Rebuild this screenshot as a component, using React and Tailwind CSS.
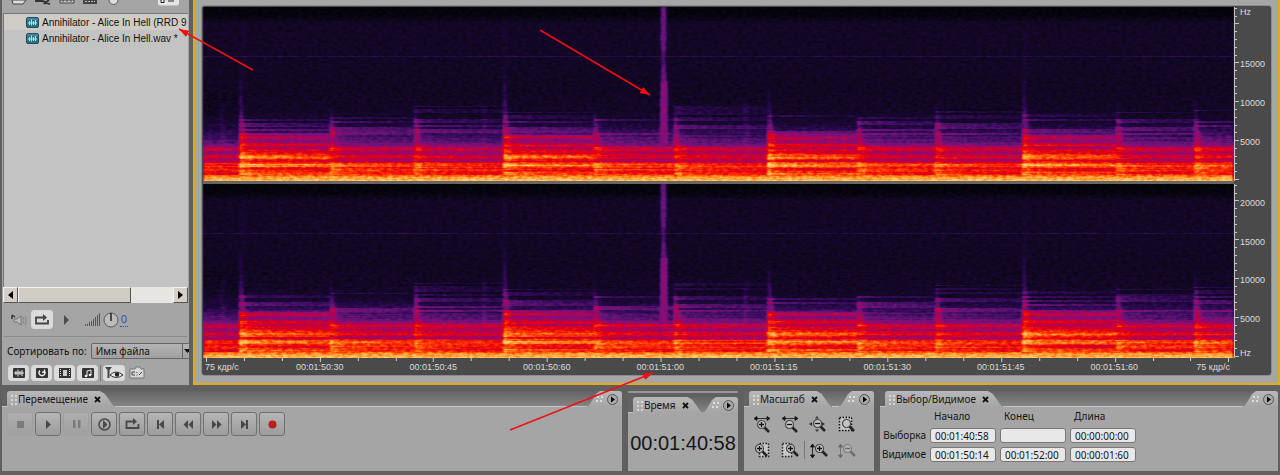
import React from "react";
import { clsx } from "clsx";

/* ---------- spectrogram ---------- */

const PLOT_W = 1032;
const PLOT_H = 174;
const CELL = 4;

// start = onset column, reach = height of the overtones, tall = top of the attack
const NOTES = [
  { start: 0, gain: -0.05, reach: 0 },
  { start: 36, gain: 0.01, reach: 2, tall: 66, loud: true },
  { start: 127, gain: 0.01, reach: 4, tall: 96 },
  { start: 211, gain: 0, reach: 14, tall: 92 },
  { start: 300, gain: 0.01, reach: 8, tall: 60, loud: true },
  { start: 391, gain: 0.01, reach: 3, tall: 98 },
  { start: 471, gain: 0, reach: 14, tall: 96 },
  { start: 565, gain: 0.01, reach: 6, tall: 78, loud: true },
  { start: 655, gain: 0.01, reach: 3, tall: 108 },
  { start: 733, gain: 0, reach: 12, tall: 96 },
  { start: 820, gain: 0.01, reach: 6, tall: 66, loud: true },
  { start: 914, gain: 0, reach: 8, tall: 96 },
  { start: 992, gain: 0.02, reach: 10, tall: 90 },
];

const AIR = [
  [0, 0.01], [9, 0.03], [16, 0.12], [60, 0.12], [85, 0.11], [105, 0.12],
  [114, 0.16], [120, 0.22], [126, 0.29],
];

// brightness of the harmonics in the lower part, top to bottom
const QUIET = [
  ...AIR, [130, 0.36], [134, 0.4], [137, 0.47], [139, 0.52], [141, 0.68], [143, 0.68],
  [145, 0.58], [147, 0.6], [149, 0.7], [151, 0.71], [152, 0.62], [155, 0.6], [156, 0.79],
  [159, 0.85], [161, 0.76], [163, 0.83], [165, 0.76], [167, 0.77], [168, 0.82], [170, 0.91], [174, 0.98],
];
const LOUD = [
  ...AIR, [127, 0.38], [129, 0.6], [131, 0.65], [133, 0.52], [135, 0.52], [137, 0.68], [139, 0.7],
  [141, 0.6], [143, 0.7], [146, 0.72], [148, 0.8], [150, 0.89], [152, 0.84], [154, 0.68],
  [156, 0.84], [158, 0.94], [160, 0.88], [161, 0.74], [164, 0.76], [166, 0.86], [168, 0.82], [170, 0.91], [174, 0.98],
];

const hash = (a, b) => {
  const v = Math.sin(a * 127.1 + b * 311.7) * 43758.5453;
  return v - Math.floor(v);
};

const valueAt = (profile, y) => {
  for (let i = 1; i < profile.length; i++) {
    const [y1, v1] = profile[i];
    const [y0, v0] = profile[i - 1];
    if (y <= y1) return v0 + ((v1 - v0) * (y - y0)) / (y1 - y0);
  }
  return 0.98;
};

// one path per brightness level, so that the drawing stays small
const buildLevels = (seed) => {
  const levels = {};
  for (let n = 0; n < NOTES.length; n++) {
    const note = NOTES[n];
    const end = n + 1 < NOTES.length ? NOTES[n + 1].start : PLOT_W;
    const profile = note.loud ? LOUD : QUIET;
    for (let y = 86; y < PLOT_H; y++) {
      const row = Math.floor(y / 2);
      for (let x = note.start; x < end; x += CELL) {
        const dx = x - note.start;
        const fade = Math.exp(-dx / 55);
        const attack = n > 0 && dx < 10 ? 1 - dx / 10 : 0;
        let v = valueAt(profile, y + 0.5);
        if (y < 168) v += note.gain * (y > 118 ? 1 : 0.3);
        if (y > 126 && y < 168) v += (fade - 0.6) * 0.09 - 0.03;
        if (n > 0 && y > 112 - note.reach && y < 128) {
          v += hash(row, n + seed) > 0.5 ? 0.14 * (0.35 + fade * 0.8) * (y < 112 ? 0.8 : 1) : -0.02;
        }
        if (y >= 112 && y < 168) v += attack * 0.06;
        if (y >= 128 && y < 168) v += (hash(y, n * 3 + seed) - 0.5) * 0.07;
        v += (hash(x, y + seed * 7) - 0.5) * 0.04;
        const key = Math.round(Math.max(0, Math.min(1, v)) * 50);
        const w = Math.min(CELL, end - x);
        levels[key] = (levels[key] || "") + `M${x} ${y}h${w}v1h-${w}z`;
      }
    }
  }
  return Object.entries(levels);
};

const Spectrogram = ({ id, seed }) => {
  const levels = React.useMemo(() => buildLevels(seed), [seed]);
  const gray = (v) => `rgb(${v * 255},${v * 255},${v * 255})`;

  return (
    <svg
      viewBox={`0 0 ${PLOT_W} ${PLOT_H}`}
      preserveAspectRatio="none"
      className="block w-full h-[174px]"
      role="img"
      aria-label={id}
    >
      <defs>
        <filter id={`heat-${id}`} x="0" y="0" width="1" height="1" colorInterpolationFilters="sRGB">
          <feTurbulence type="fractalNoise" baseFrequency="0.2 0.35" numOctaves="2" seed={seed} />
          <feColorMatrix values="1 0 0 0 0  1 0 0 0 0  1 0 0 0 0  0 0 0 0 1" result="noise" />
          <feGaussianBlur in="SourceGraphic" stdDeviation="0.8 0.4" result="soft" />
          <feComposite in="soft" in2="noise" operator="arithmetic" k1="0.1" k2="0.95" k3="0.14" k4="-0.07" />
          <feComponentTransfer>
            <feFuncR type="table" tableValues="0.01 0.06 0.12 0.24 0.4 0.55 0.74 0.9 0.99 1 1" />
            <feFuncG type="table" tableValues="0.01 0.03 0.03 0.05 0.08 0.05 0 0 0.22 0.57 0.8" />
            <feFuncB type="table" tableValues="0.03 0.12 0.24 0.38 0.46 0.46 0.28 0.06 0.01 0.14 0.42" />
          </feComponentTransfer>
        </filter>
        <linearGradient id={`air-${id}`} x1="0" y1="0" x2="0" y2="1">
          {AIR.map(([y, v]) => (
            <stop key={y} offset={y / PLOT_H} stopColor={gray(v)} />
          ))}
        </linearGradient>
        <linearGradient id={`hit-${id}`} x1="0" y1="0" x2="0" y2="1">
          <stop offset="0" stopColor="#fff" stopOpacity="0.04" />
          <stop offset="0.6" stopColor="#fff" stopOpacity="0.24" />
          <stop offset="1" stopColor="#fff" stopOpacity="0" />
        </linearGradient>
      </defs>
      <g filter={`url(#heat-${id})`}>
        <rect width={PLOT_W} height={PLOT_H} fill={`url(#air-${id})`} />
        <g shapeRendering="crispEdges">
          {levels.map(([key, d]) => (
            <path key={key} d={d} fill={gray(key / 50)} />
          ))}
        </g>
        <path d="M0 49.5H1032" stroke="#fff" strokeOpacity="0.13" />
        {NOTES.filter((note) => note.tall).map(({ start, tall }) => (
          <path
            key={start}
            d={`M${start} ${tall}h2l3 ${(150 - tall) / 2}l4 ${(150 - tall) / 2}h-9z`}
            fill={`url(#hit-${id})`}
          />
        ))}
        {[17, 279, 541].map((x) => (
          <rect key={x} x={x} y="96" width="5" height="44" fill="#fff" opacity="0.07" />
        ))}
        {[38, 300, 821].map((x) => (
          <rect key={x} x={x} y="14" width="5" height="70" fill="#fff" opacity="0.03" />
        ))}
        {/* the click */}
        <path d="M458 0h6v30l-1 24 2 26v58h-7v-58l1-26-1-24z" fill="#6a6a6a" />
        <path d="M458 74h7v64h-8z" fill="#7c7c7c" />
        <path d="M459 44h4v16h-4z" fill="#505050" opacity="0.7" />
      </g>
    </svg>
  );
};

const axisTicks = (zero) => {
  let d = "";
  for (let k = 0; k <= 22; k++) {
    const y = Math.round(zero - k * 7.78) + 0.5;
    if (y > 0) d += `M0 ${y}h${k % 5 === 0 ? 4 : 2}`;
  }
  return d;
};

const scaleText = "font-['Liberation_Sans',Arial,sans-serif] text-[9px] leading-[10px] text-[#dcdcdc]";

const FrequencyAxis = ({ labels, zero, top, bottom }) => (
  <div className="flex h-[174px] border-l border-[#c4c4c4]">
    <svg width="5" height="174" className="shrink-0" aria-hidden="true">
      <path d={axisTicks(zero)} stroke="#c4c4c4" />
    </svg>
    <div className={clsx("flex flex-col grow justify-end", scaleText)}>
      {top && <span className="grow">Hz</span>}
      {labels.map((label) => (
        <span key={label} className="h-[39px] flex items-center">{label}</span>
      ))}
      <span className="h-5 flex items-end">{bottom && "Hz"}</span>
    </div>
  </div>
);

const TIMES = [
  "00:01:50:30", "00:01:50:45", "00:01:50:60", "00:01:51:00",
  "00:01:51:15", "00:01:51:30", "00:01:51:45", "00:01:51:60",
];

const TIME_TICKS = Array.from({ length: 28 }, (_, i) => `M${Math.round(3 + i * 37.9) + 0.5} 0v${i % 3 === 0 ? 4 : 3}`).join("");

const EditorPanel = () => (
  <main className="grow min-w-0 border-2 border-t-0 border-[#e3aa1f] bg-[#a6a6a6] px-[7px] pt-[6px] pb-2">
    <div className="rounded-[3px] bg-[#4a4a4a] pt-px pl-px shadow-[0_0_0_1px_#8c8c8c]">
      <div className="flex">
        <div className="grow min-w-0">
          <Spectrogram id="left" seed={3} />
          <div className="h-[3px] bg-[#666]" />
          <Spectrogram id="right" seed={8} />
        </div>
        <div className="w-[37px] shrink-0 flex flex-col gap-[3px]">
          <FrequencyAxis labels={["15000", "10000", "5000"]} zero={172} top />
          <FrequencyAxis labels={["20000", "15000", "10000", "5000"]} zero={172} bottom />
        </div>
      </div>
      <div className={clsx("mr-[37px] h-[17px]", scaleText)}>
        <svg viewBox="0 0 1032 4" preserveAspectRatio="none" className="block w-full h-1" aria-hidden="true">
          <path d={TIME_TICKS} stroke="#d0d0d0" />
        </svg>
        <div className="flex whitespace-nowrap">
          <span className="w-[60px] pl-0.5">75 кдр/с</span>
          {TIMES.map((time) => (
            <span key={time} className="flex-1 text-center">{time}</span>
          ))}
          <span className="w-[63px] pr-1 text-right">75 кдр/с</span>
        </div>
      </div>
    </div>
  </main>
);

/* ---------- file list ---------- */

const WaveIcon = () => (
  <svg width="13" height="11" viewBox="0 0 13 11" className="shrink-0" aria-hidden="true">
    <rect x="0.5" y="0.5" width="12" height="10" rx="1.5" fill="#2c6f88" stroke="#234a5e" />
    <path d="M1 2h11" stroke="#5e9bb0" />
    <path d="M2 6h9M3.5 4v4M5.5 2.5v6M7.5 4v4M9.5 3v5" stroke="#9ff0e4" />
  </svg>
);

const FILES = [
  { name: "Annihilator - Alice In Hell (RRD 9", active: true },
  { name: "Annihilator - Alice In Hell.wav *" },
];

const FILTERS = [
  { label: "Аудио", icon: <><rect x="2" y="1" width="12" height="10" rx="1" fill="#333" /><path d="M3 6h10M5 4v4M7 2.5v7M9 4v4M11 3v6" stroke="#eee" /></> },
  { label: "Петли", icon: <><rect x="2" y="1" width="12" height="10" rx="1" fill="#333" /><path d="M6 3.5a3 3 0 1 0 4 0M10.5 2.5v2.8H8" fill="none" stroke="#eee" strokeWidth="1.5" /></> },
  { label: "Видео", icon: <><rect x="2" y="1" width="12" height="10" fill="#333" /><path d="M6 3h4v6H6z" fill="#ccc" /><path d="M3.5 2v8M12.5 2v8" stroke="#ddd" strokeDasharray="1 1" /></> },
  { label: "MIDI", icon: <><rect x="2" y="1" width="12" height="10" rx="1" fill="#333" /><path d="M7 9V4l4-1v5" fill="none" stroke="#eee" /><circle cx="6" cy="9" r="1.3" fill="#eee" /><circle cx="10" cy="8" r="1.3" fill="#eee" /></> },
];

const whiteButton = "flex items-center justify-center rounded-[3px] border border-[#d8d8d8] bg-[#dcdcdc]";

const FilesPanel = () => (
  <aside className="w-[193px] shrink-0 border-l-2 border-r-4 border-[#606060] bg-[#a5a5a5] flex flex-col overflow-hidden text-[#111]">
    <div className="h-[13px] shrink-0 flex items-start pl-2">
      <svg width="148" height="7" aria-hidden="true">
        <path d="M2 0h14l-3 4H3z" fill="#ddd" stroke="#444" />
        <path d="M25 1h8M30 0l10 4M39 0l-5 4" stroke="#333" strokeWidth="2" />
        <path d="M50 0v3h14V0z" fill="#ccc" stroke="#444" /><path d="M52 1h10" stroke="#444" strokeDasharray="2 2" />
        <path d="M73 0h14v4H73z" fill="#444" /><path d="M75 1.5h10" stroke="#bbb" strokeDasharray="2 1" />
        <path d="M99 0a4 4 0 0 0 9 0" fill="#ddd" stroke="#555" />
      </svg>
      <svg width="22" height="7" aria-hidden="true">
        <path d="M0 0h21v3.500a2 2 0 0 1-2 2H2a2 2 0 0 1-2-2z" fill="#e4e4e4" />
        <path d="M3 0v2.500h3V0M10 1h6" fill="none" stroke="#222" />
      </svg>
    </div>
    <div className="grow mx-px border-t border-l border-[#777] bg-[#c3c3c3] overflow-hidden">
      <ul className="font-['Liberation_Sans',Arial,sans-serif] text-[10px]">
        {FILES.map((file) => (
          <li key={file.name} className={clsx("h-4 pl-[22px] flex items-center gap-[3px] whitespace-pre", file.active && "bg-[#cfccc6]")}>
            <WaveIcon />
            <span>{file.name}</span>
          </li>
        ))}
      </ul>
    </div>
    <div className="h-4 shrink-0 mx-px flex bg-[#e6e5e2]">
      <button aria-label="Прокрутить влево" className="w-[15px] flex items-center justify-center border border-[#f4f4f4] border-r-[#555] border-b-[#555] bg-[#d4d0c8]">
        <svg width="5" height="8"><path d="M5 0v8L0 4z" fill="#000" /></svg>
      </button>
      <div className="w-[113px] border border-[#f4f4f4] border-r-[#555] border-b-[#555] bg-[#d0ccc4]" />
      <div className="grow" />
      <button aria-label="Прокрутить вправо" className="w-[15px] flex items-center justify-center border border-[#f4f4f4] border-r-[#555] border-b-[#555] bg-[#d4d0c8]">
        <svg width="5" height="8"><path d="M0 0v8l5-4z" fill="#000" /></svg>
      </button>
    </div>
    <div className="h-[34px] shrink-0 mx-0.5 pl-[7px] flex items-center border-b border-[#8a8a8a]">
      <svg width="16" height="14" aria-hidden="true">
        <path d="M1 2v4M1 2l3 2" stroke="#333" fill="none" strokeWidth="1.5" />
        <path d="M3 6h3l4-3v9L6 9H3z" fill="#bbb" stroke="#777" />
        <path d="M12 4q2 3 0 7M14 3q3 4 0 9" stroke="#888" fill="none" />
      </svg>
      <button aria-label="Повтор" className={clsx(whiteButton, "ml-1 w-[22px] h-[19px]")}>
        <svg width="16" height="12"><path d="M5 3.5H2v6h12V6M4 3.5h6" fill="none" stroke="#444" strokeWidth="1.8" /><path d="M9 0v7l4-3.500z" fill="#444" /></svg>
      </button>
      <button aria-label="Воспроизвести" className="ml-2.5 w-2 h-3">
        <svg width="7" height="10"><path d="M1 0v10l5-5z" fill="#4c4c4c" /></svg>
      </button>
      <svg width="15" height="14" className="ml-3.5" aria-hidden="true">
        <path d="M0.500 11v2M2.500 11v2M4.500 9v4M6.500 8v5M8.500 6v7M10.500 4v9M12.500 2v11M14.500 0v13" stroke="#555" />
      </svg>
      <svg width="18" height="18" className="ml-0.5" aria-hidden="true">
        <circle cx="9" cy="9" r="7" fill="#bcbcbc" stroke="#5a5a5a" /><path d="M9 2v8" stroke="#222" strokeWidth="1.5" />
      </svg>
      <a href="#volume" className="h-[15px] w-2 text-center text-[11px] leading-[14px] text-[#2756b8] border-b border-dotted border-[#2756b8]">0</a>
    </div>
    <div className="h-7 shrink-0 pl-[5px] flex items-center gap-1 whitespace-nowrap text-[10px]">
      <label htmlFor="sort">Сортировать по:</label>
      <div className="relative shrink-0">
        <select id="sort" className="appearance-none block w-[110px] h-4 rounded-[2px] border border-[#666] bg-linear-to-b from-[#b4b4b4] to-[#a0a0a0] pl-1 leading-[14px]">
          <option>Имя файла</option>
        </select>
        <svg width="12" height="14" className="absolute left-[91px] top-px pointer-events-none" aria-hidden="true">
          <path d="M0.500 0v14" stroke="#666" /><path d="M2 5h7l-3.500 4z" fill="#111" />
        </svg>
      </div>
    </div>
    <div className="h-5 shrink-0 pl-[6px] flex items-start gap-0.5">
      {FILTERS.map(({ label, icon }) => (
        <button key={label} aria-label={label} className={clsx(whiteButton, "w-[21px] h-4")}>
          <svg width="16" height="12">{icon}</svg>
        </button>
      ))}
      <span className="w-px h-4 bg-[#777]" />
      <button aria-label="Показ" className={clsx(whiteButton, "w-[22px] h-4")}>
        <svg width="20" height="14"><path d="M1 1h7L5.500 4v8h-2V4z" fill="#444" /><path d="M6 9q6-6 13 0-7 5-13 0z" fill="#eee" stroke="#333" /><circle cx="13" cy="8.500" r="2.200" fill="#222" /></svg>
      </button>
      <button aria-label="Полный путь" className="ml-0.5 w-4 h-4">
        <svg width="16" height="14"><path d="M1 3h5l1-2h4l1 2h3v9H1z" fill="#d8d8d8" stroke="#777" /><path d="M6 6H3v3h3M8 6v1M8 8.500v1M10 9l3-3" fill="none" stroke="#444" /></svg>
      </button>
    </div>
  </aside>
);

/* ---------- bottom panels ---------- */

const Grip = () => (
  <svg width="7" height="11" className="shrink-0" aria-hidden="true">
    <path d="M1 1v10M5 1v10" stroke="#d6d6d6" strokeWidth="2" strokeDasharray="2 2" />
  </svg>
);

const Panel = ({ title, className, children }) => (
  <section className={clsx("flex flex-col min-w-0", className)}>
    <header className="h-4 flex items-stretch bg-[linear-gradient(#646464,#868686)]">
      <div className="w-[5px] shrink-0 border-b border-[#c2c2c2] bg-[#646464]" />
      <div className="flex items-center gap-1 pl-1 pr-[14px] rounded-tl-[3px] bg-linear-to-b from-[#b8b8b8] to-[#a5a5a5] text-[10px] leading-4 text-[#151515] [clip-path:polygon(0_0,calc(100%_-_15px)_0,calc(100%_-_10px)_3px,calc(100%_-_3px)_13px,100%_100%,0_100%)]">
        <Grip />
        <h2 className="-ml-1">{title}</h2>
        <button aria-label="Закрыть" className="ml-0.5 w-[7px] h-[7px]">
          <svg width="7" height="7" className="block"><path d="M1 1l5 5M6 1L1 6" stroke="#111" strokeWidth="1.800" /></svg>
        </button>
      </div>
      <div className="grow border-b border-[#c2c2c2]" />
      <div className="flex items-center gap-0.5 pl-[9px] pr-1 rounded-tr-[3px] bg-linear-to-b from-[#b8b8b8] to-[#a5a5a5] [clip-path:polygon(0_100%,3px_13px,9px_3px,13px_0,100%_0,100%_100%)]">
        <svg width="9" height="7" aria-hidden="true"><path d="M1 1h9M0 5h7" stroke="#dcdcdc" strokeWidth="2" strokeDasharray="2 2" /></svg>
        <button aria-label="Меню" className="w-[11px] h-[11px]">
          <svg width="11" height="11" className="block"><circle cx="5.500" cy="5.500" r="5" fill="#aaa" stroke="#555" /><path d="M4 2.500v6l4-3z" fill="#000" /></svg>
        </button>
      </div>
    </header>
    <div className="grow bg-[#a5a5a5]">{children}</div>
  </section>
);

const TRANSPORT = [
  { label: "Стоп", off: true, icon: <path d="M5 5h7v7H5z" /> },
  { label: "Играть", icon: <path d="M6 4v9l5-4.500z" /> },
  { label: "Пауза", off: true, icon: <path d="M5 4h2.500v8H5zM10 4h2.500v8H10z" /> },
  { label: "Играть до конца", icon: <><circle cx="8.500" cy="8.500" r="5.500" fill="none" stroke="#484848" strokeWidth="1.500" /><path d="M7 4v9l4.500-4.500z" /></> },
  { label: "Играть по кругу", icon: <><path d="M4 5.500H2.500v6.500h12V8M3 5.500h7" fill="none" stroke="#484848" strokeWidth="1.800" /><path d="M9 2v7l4-3.500z" /></> },
  { label: "В начало", icon: <path d="M5 4h2v9H5zM12 4v9L7 8.500z" /> },
  { label: "Назад", icon: <path d="M8 4v9L3.500 8.500zM13 4v9L8.500 8.500z" /> },
  { label: "Вперёд", icon: <path d="M4 4v9l4.500-4.500zM9 4v9l4.500-4.500z" /> },
  { label: "В конец", icon: <path d="M5 4v9l5-4.500zM10 4h2v9h-2z" /> },
  { label: "Запись", icon: <circle cx="8.500" cy="8.500" r="4" fill="#bd1c1c" /> },
];

const Lens = ({ x = 0, y = 0, sign }) => (
  <g transform={`translate(${x} ${y})`}>
    <path d="M8 8l5 5" stroke="#222" strokeWidth="2.500" />
    <circle cx="5.500" cy="5.500" r="4" fill="#c4c4c4" stroke="#444" strokeWidth="1.200" />
    {sign && <path d={sign === "+" ? "M3 5.500h5M5.500 3v5" : "M3 5.500h5"} stroke="#111" strokeWidth="1.300" />}
  </g>
);

const hArrow = <path d="M3 2.500h12M1 2.500l3-2v4zM17 2.500l-3-2v4z" stroke="#111" fill="#111" strokeWidth="0.800" />;
const vArrow = <path d="M3.500 4v10M3.500 2l-2 3h4zM3.500 16l-2-3h4z" stroke="#111" fill="#111" strokeWidth="0.800" />;

const ZOOMS = [
  { label: "Увеличить по горизонтали", icon: <>{hArrow}<Lens x={3} y={3} sign="+" /></> },
  { label: "Уменьшить по горизонтали", icon: <>{hArrow}<Lens x={3} y={3} sign="-" /></> },
  { label: "Показать всё", icon: <><path d="M8 0l2 2.500H6zM0 8l3-2v4zM16 8l-3-2v4zM8 16l-2-2.500h4z" fill="#333" /><Lens x={3} y={2} sign="-" /></> },
  { label: "Показать выделение", icon: <><rect x="2.500" y="1.500" width="12" height="13" fill="#c8c8c8" stroke="#111" strokeWidth="1.500" strokeDasharray="1.500 1.500" /><Lens x={4} y={2} /></> },
  { label: "К левому краю", icon: <><rect x="6.500" y="1.500" width="9" height="13" fill="#c8c8c8" stroke="#222" strokeWidth="1.500" strokeDasharray="1.500 1.500" /><Lens x={1} y={1} sign="+" /></> },
  { label: "К правому краю", icon: <><rect x="1.500" y="1.500" width="9" height="13" fill="#c8c8c8" stroke="#222" strokeWidth="1.500" strokeDasharray="1.500 1.500" /><Lens x={4} y={1} sign="+" /></> },
  { label: "Увеличить по вертикали", icon: <>{vArrow}<Lens x={5} y={1} sign="+" /></> },
  { label: "Уменьшить по вертикали", off: true, icon: <>{vArrow}<Lens x={5} y={1} sign="-" /></> },
];

const ROWS = [
  { label: "Выборка", values: ["00:01:40:58", "", "00:00:00:00"] },
  { label: "Видимое", values: ["00:01:50:14", "00:01:52:00", "00:00:01:60"] },
];
const COLUMNS = ["Начало", "Конец", "Длина"];

const BottomBar = () => (
  <div className="grow grid grid-cols-[620fr_110px_130px_398fr] gap-1.5 px-0.5 pt-1.5 pb-1">
    <Panel title="Перемещение">
      <div className="flex gap-0.5 pl-[5px] pt-[5px]">
        {TRANSPORT.map(({ label, off, icon }) => (
          <button
            key={label}
            aria-label={label}
            disabled={off}
            className={clsx(
              "w-[26px] h-6 rounded-[3px] border flex items-center justify-center bg-linear-to-b from-[#b6b6b6] to-[#9c9c9c]",
              off ? "border-[#a0a0a0] opacity-60" : "border-[#707070]"
            )}
          >
            <svg width="17" height="17" fill={off ? "#606060" : "#484848"}>{icon}</svg>
          </button>
        ))}
      </div>
    </Panel>

    <div className="flex flex-col gap-1">
      <div className="h-0.5 rounded-full bg-[#969696]" />
      <Panel title="Время" className="grow">
        <output className="block pt-[18px] text-center font-['Liberation_Sans',Arial,sans-serif] text-[20px] leading-6 text-[#161616]">00:01:40:58</output>
      </Panel>
    </div>

    <Panel title="Масштаб">
      <div className="grid grid-cols-[repeat(4,28px)] gap-y-2 pl-1 pt-2">
        {ZOOMS.map(({ label, off, icon }, i) => (
          <button
            key={label}
            aria-label={label}
            disabled={off}
            className={clsx("h-[18px] flex items-center justify-center", off && "opacity-40", i === 6 && "border-l border-[#777]")}
          >
            <svg width="19" height="17">{icon}</svg>
          </button>
        ))}
      </div>
    </Panel>

    <Panel title="Выбор/Видимое">
      <div className="grid grid-cols-[46px_66px_66px_66px] gap-x-1 gap-y-1 pt-0.5 text-[10px] leading-[15px] text-[#151515]">
        <span />
        {COLUMNS.map((column) => (
          <span key={column} className="pl-1">{column}</span>
        ))}
        {ROWS.map((row) => (
          <React.Fragment key={row.label}>
            <span className="text-right">{row.label}</span>
            {row.values.map((value, i) => (
              <input
                key={COLUMNS[i]}
                aria-label={`${row.label} ${COLUMNS[i]}`}
                defaultValue={value}
                className="w-full h-[15px] rounded-[3px] border border-[#777] bg-[#e8e8e8] pl-1 leading-[13px]"
              />
            ))}
          </React.Fragment>
        ))}
      </div>
    </Panel>
  </div>
);

// red pointers drawn over the window
const ARROWS = [
  { from: [253, 70], to: [179, 29] },
  { from: [540, 30], to: [650, 95] },
  { from: [510, 430], to: [653, 373] },
];

const Arrows = () => (
  <svg width="700" height="475" className="absolute left-0 top-0 pointer-events-none" aria-hidden="true">
    <defs>
      <marker id="tip" markerUnits="userSpaceOnUse" markerWidth="11" markerHeight="8" refX="10" refY="3.500" orient="auto">
        <path d="M0 0l10 3.500L0 7z" fill="#f01010" />
      </marker>
    </defs>
    {ARROWS.map(({ from, to }) => (
      <path key={from[0]} d={`M${from}L${to}`} stroke="#f01010" strokeWidth="1.500" markerEnd="url(#tip)" />
    ))}
  </svg>
);

const App = () => (
  <div className="relative min-h-screen flex flex-col overflow-hidden bg-[#606060] font-['Noto_Sans',Tahoma,sans-serif]">
    <div className="flex">
      <FilesPanel />
      <EditorPanel />
    </div>
    <BottomBar />
    <Arrows />
  </div>
);

export default App;
